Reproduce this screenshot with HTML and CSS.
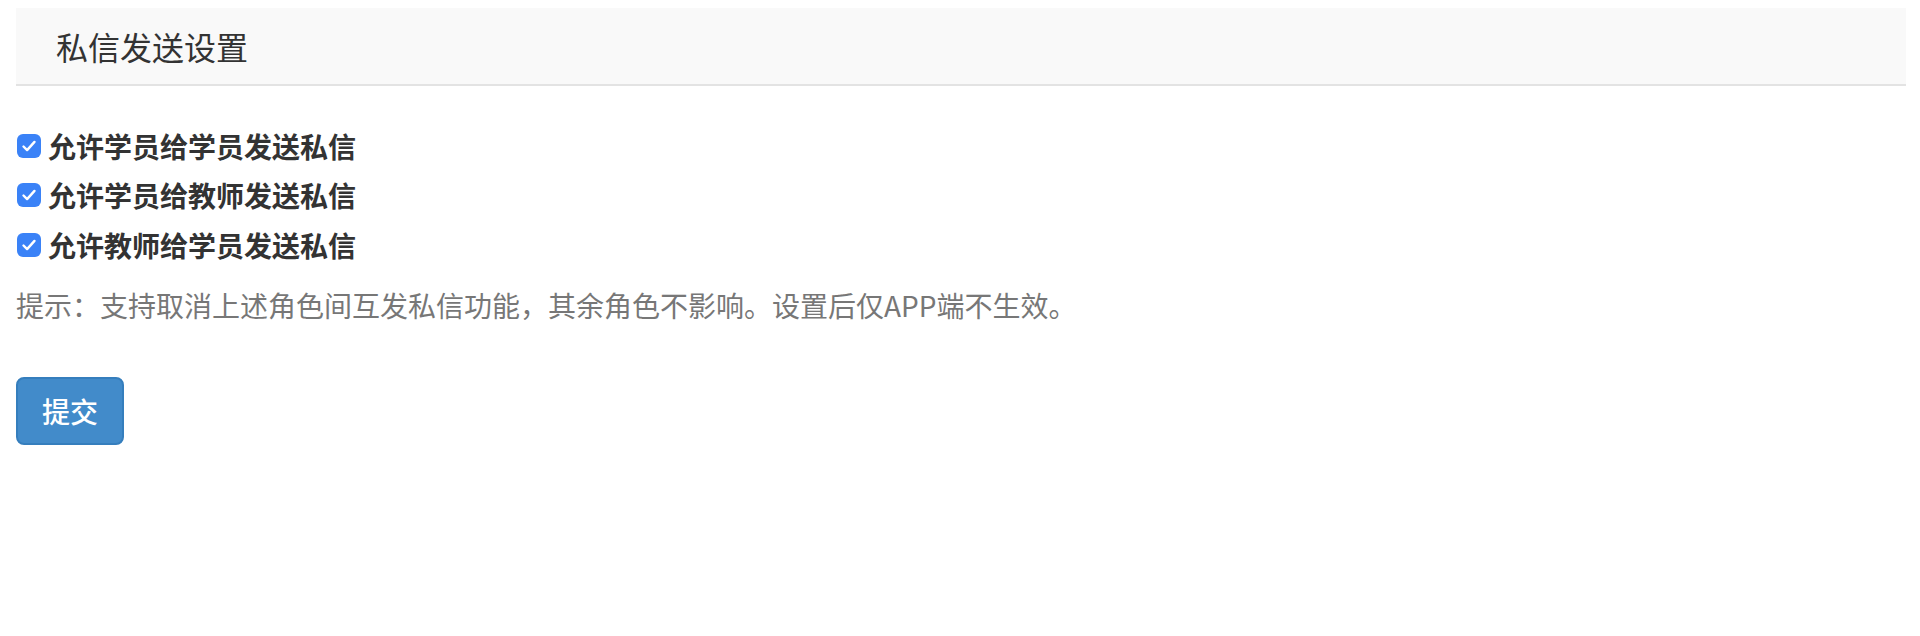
FILE: index.html
```html
<!DOCTYPE html>
<html lang="zh">
<head>
<meta charset="utf-8">
<title>私信发送设置</title>
<link rel="stylesheet" href="styles.css">
</head>
<body>
<div class="page">
  <div class="panel-heading">私信发送设置</div>
  <form class="settings">
    <label class="check-row"><span class="check"><svg viewBox="0 0 24 24" width="24" height="24"><path d="M6.5 12.5l3.6 3.6 7.4-8.2" fill="none" stroke="#fff" stroke-width="2.4" stroke-linecap="round" stroke-linejoin="round"/></svg></span>允许学员给学员发送私信</label>
    <label class="check-row"><span class="check"><svg viewBox="0 0 24 24" width="24" height="24"><path d="M6.5 12.5l3.6 3.6 7.4-8.2" fill="none" stroke="#fff" stroke-width="2.4" stroke-linecap="round" stroke-linejoin="round"/></svg></span>允许学员给教师发送私信</label>
    <label class="check-row"><span class="check"><svg viewBox="0 0 24 24" width="24" height="24"><path d="M6.5 12.5l3.6 3.6 7.4-8.2" fill="none" stroke="#fff" stroke-width="2.4" stroke-linecap="round" stroke-linejoin="round"/></svg></span>允许教师给学员发送私信</label>
    <p class="hint">提示：支持取消上述角色间互发私信功能，其余角色不影响。设置后仅APP端不生效。</p>
    <button type="button" class="btn-primary">提交</button>
  </form>
</div>
</body>
</html>
```

FILE: styles.css
```css
html, body {
  margin: 0;
  padding: 0;
  background: #fff;
}
body {
  font-family: "Noto Sans CJK SC", "Noto Sans", "Liberation Sans", sans-serif;
  color: #333;
}
.page {
  padding: 8px 14px 0 16px;
}
.panel-heading {
  height: 78px;
  box-sizing: border-box;
  padding: 0 0 0 40px;
  display: flex;
  align-items: center;
  background: #f9f9f9;
  border-bottom: 2px solid #e3e3e3;
  font-size: 32px;
  color: #333;
}
.settings {
  display: flex;
  flex-direction: column;
  align-items: flex-start;
  padding-top: 35px;
}
.check-row {
  display: flex;
  align-items: center;
  height: 49.5px;
  font-size: 28px;
  font-weight: 700;
  color: #333;
}
.check {
  width: 24px;
  height: 24px;
  margin: 0 7px 0 1px;
  border-radius: 6px;
  background: #3a82f7;
  display: flex;
  align-items: center;
  justify-content: center;
}
.check svg {
  display: block;
}
.hint {
  margin: 15px 0 0 0;
  line-height: 40px;
  font-size: 28px;
  color: #777;
}
.btn-primary {
  margin-top: 52px;
  width: 108px;
  height: 68px;
  padding: 0;
  font-family: inherit;
  font-size: 28px;
  font-weight: 500;
  color: #fff;
  background: #428bca;
  border: 2px solid #357ebd;
  border-radius: 8px;
}
```
